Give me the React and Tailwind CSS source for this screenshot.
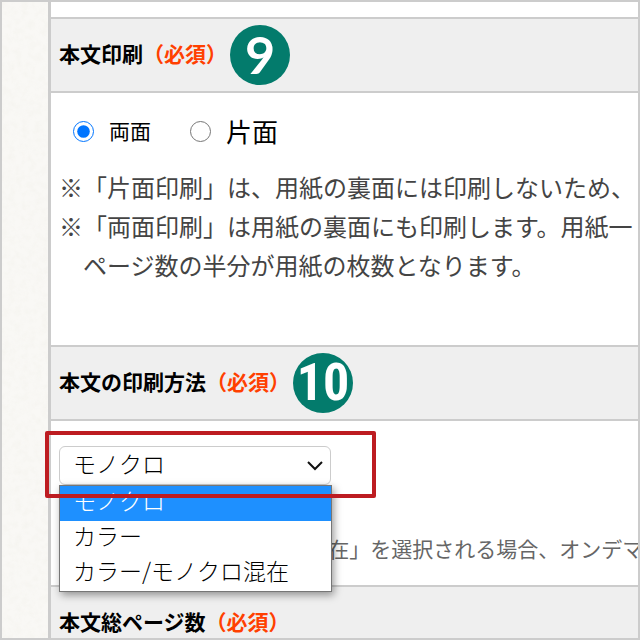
import { useState } from "react";

const methods = ["モノクロ", "カラー", "カラー/モノクロ混在"];

function SectionHead({ title, children }) {
  return (
    <div className="flex min-h-[76px] items-center gap-[3px] border-y-2 border-[#ccc] bg-[#efefef] pl-2">
      <h2 className="pb-1 text-[21px] leading-[30px] font-bold whitespace-nowrap text-black">
        {title}
        <span className="text-[#ff4000]">（必須）</span>
      </h2>
      {children}
    </div>
  );
}

function PaperStrip() {
  return (
    <div className="w-[46px] shrink-0 bg-[#f9f8f5]">
      <svg className="h-full w-full" aria-hidden="true">
        <filter id="paper">
          <feTurbulence type="fractalNoise" baseFrequency="0.15" numOctaves="3" seed="4" />
          <feColorMatrix values="0 0 0 0 0.88  0 0 0 0 0.87  0 0 0 0 0.82  1.6 0 0 0 -0.6" />
        </filter>
        <rect width="100%" height="100%" filter="url(#paper)" opacity="0.5" />
      </svg>
    </div>
  );
}

export default function App() {
  const [side, setSide] = useState("both");
  const [method, setMethod] = useState(methods[0]);

  return (
    <div className="flex h-screen overflow-hidden border-2 border-[#ccc] bg-white font-['Noto_Sans_CJK_JP',sans-serif]">
      <PaperStrip />
      <main className="min-w-0 flex-1 border-l-3 border-[#ccc]">
        <div className="h-[15px]" />

        <section>
          <SectionHead title="本文印刷">
            <span className="flex size-[60px] items-center justify-center rounded-full bg-[#037b6c] pb-[2px] font-['Lato',sans-serif] text-[52px] leading-[58px] font-bold text-white">
              9
            </span>
          </SectionHead>
          <div className="pt-[18px] pb-[61px] pl-2">
            <div className="flex h-10 items-center pl-[14px] text-black">
              <input
                id="both"
                type="radio"
                name="side"
                className="size-[21px]"
                checked={side === "both"}
                onChange={() => setSide("both")}
              />
              <label htmlFor="both" className="ml-[15px] text-[21px]">
                両面
              </label>
              <input
                id="single"
                type="radio"
                name="side"
                className="ml-[39px] size-[21px]"
                checked={side === "single"}
                onChange={() => setSide("single")}
              />
              <label htmlFor="single" className="ml-[15px] pb-[2px] text-[26px]">
                片面
              </label>
            </div>
            <p className="mt-4 text-[24px] leading-[39px] whitespace-nowrap text-[#444]">
              ※「片面印刷」は、用紙の裏面には印刷しないため、
              <br />
              ※「両面印刷」は用紙の裏面にも印刷します。用紙一
              <br />
              {"\u3000"}ページ数の半分が用紙の枚数となります。
            </p>
          </div>
        </section>

        <section>
          <SectionHead title="本文の印刷方法">
            <span className="flex size-[60px] items-center justify-center rounded-full bg-[#037b6c] font-['Roboto_Condensed','Open_Sans_Condensed','Liberation_Sans',sans-serif] text-[52px] leading-[60px] font-bold text-white">
              10
            </span>
          </SectionHead>
          <div className="pt-[25px] pb-[17px] pl-2">
            <div className="relative w-[272px]">
              <select
                aria-label="本文の印刷方法"
                className="block h-[39px] w-full appearance-none rounded-md border border-[#ccc] bg-white pb-1 pl-[13px] text-[23px] leading-[33px] font-light text-black"
                value={method}
                onChange={(e) => setMethod(e.target.value)}
              >
                {methods.map((m) => (
                  <option key={m}>{m}</option>
                ))}
              </select>
              <svg
                className="pointer-events-none absolute top-[14px] right-[8px] h-[12px] w-[16px]"
                viewBox="0 0 16 12"
                fill="none"
                stroke="#111"
                strokeWidth="2"
                aria-hidden="true"
              >
                <path d="M1 2L8 9L15 2" />
              </svg>
              <ul
                role="listbox"
                aria-label="選択肢"
                className="absolute top-full left-0 z-10 w-[273px] border border-[#767676] bg-white text-[23px] leading-[28px] font-light text-black shadow-[2px_3px_8px_rgba(0,0,0,0.4)]"
              >
                {methods.map((m) => (
                  <li
                    key={m}
                    role="option"
                    aria-selected={m === method}
                    onClick={() => setMethod(m)}
                    className="pb-[7px] pl-[13px] aria-selected:bg-[#1e90ff] aria-selected:text-white"
                  >
                    {m}
                  </li>
                ))}
              </ul>
              <div className="pointer-events-none absolute -top-[15px] -left-[14px] z-20 h-[67px] w-[331px] rounded-xs border-4 border-[#bd1c21]" />
            </div>
            <p className="mt-11 pl-[51px] text-[21px] leading-[39px] whitespace-nowrap text-[#666]">
              ※「カラー/モノクロ混在」を選択される場合、オンデマ
            </p>
          </div>
        </section>

        <SectionHead title="本文総ページ数" />
      </main>
    </div>
  );
}
